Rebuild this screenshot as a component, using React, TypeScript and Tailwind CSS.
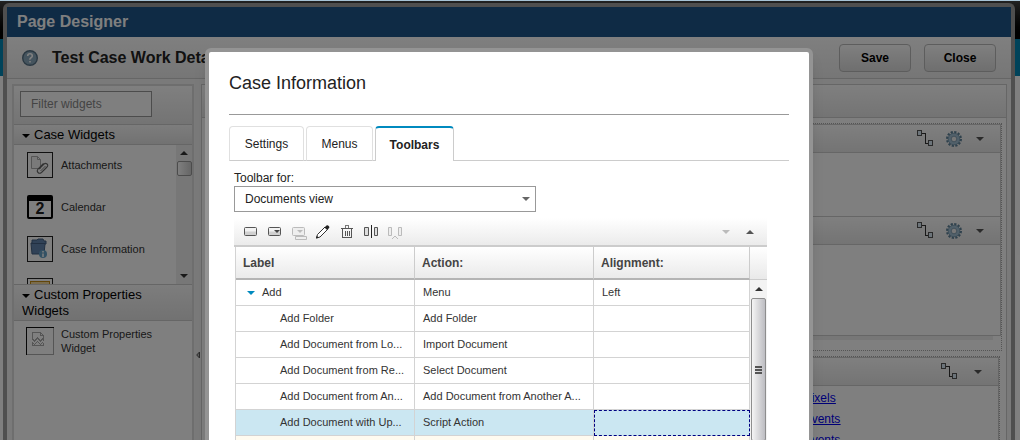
import { FunctionComponent, ReactNode } from "react";

const WireIcon = () => (
  <svg width="17" height="17" viewBox="0 0 17 17" fill="none" shapeRendering="crispEdges">
    <path d="M5 3.5h3.5v10H11" stroke="#333" />
    <rect x="0.5" y="0.5" width="4" height="5" fill="#d8e8f4" stroke="#555" />
    <rect x="11.5" y="10.5" width="4" height="5" fill="#d8e8f4" stroke="#555" />
  </svg>
);

const GearIcon = () => (
  <svg width="16" height="16" viewBox="0 0 16 16" fill="none">
    <circle cx="8" cy="8" r="6.8" stroke="#5f8299" strokeWidth="2.4" strokeDasharray="2.2 1.36" />
    <circle cx="8" cy="8" r="4.4" stroke="#a3c1d4" strokeWidth="3.4" />
    <circle cx="8" cy="8" r="5.8" stroke="#6f91a8" strokeWidth="0.7" />
    <circle cx="8" cy="8" r="2.8" stroke="#6f91a8" strokeWidth="0.8" fill="#eee" />
  </svg>
);

const Down = ({ className = "text-[#555]" }: { className?: string }) => (
  <svg width="8" height="4" viewBox="0 0 8 4" className={className} fill="currentColor">
    <path d="M0 0h8L4 4z" />
  </svg>
);

const Up = ({ className = "text-[#555]" }: { className?: string }) => (
  <svg width="8" height="4" viewBox="0 0 8 4" className={className} fill="currentColor">
    <path d="M0 4h8L4 0z" />
  </svg>
);

const AttachmentIcon = () => (
  <svg width="26" height="26" viewBox="0 0 26 26" fill="none">
    <rect x="0.5" y="0.5" width="25" height="25" fill="#fff" stroke="#222" />
    <path d="M4.5 4.5h6l3 3v9h-9zM10.5 4.5v3h3" stroke="#aaa" fill="#f4f4f4" />
    <path d="M12 17l5-5q1.500-1.300 3 0t0 3l-5.500 5.500q-2 1.500-3.500 0t0-3.500l5.500-5.500" stroke="#666" strokeWidth="1.1" />
    <path d="M13.500 19l5-5" stroke="#888" />
  </svg>
);

const CalendarIcon = () => (
  <div className="flex h-6 w-[26px] items-end justify-center rounded-xs border-2 border-t-[6px] border-black bg-white text-base leading-4 font-bold text-[#222]">
    2
  </div>
);

const CaseIcon = () => (
  <svg width="26" height="26" viewBox="0 0 26 26" fill="none">
    <rect x="0.5" y="0.5" width="25" height="25" fill="#fff" stroke="#222" />
    <path d="M5 4h5l1-1h5l1 2h2v3h-1l-1 10H5L4 7h1z" fill="#6385ae" stroke="#456184" />
    <path d="M4 7.5h14" stroke="#456184" />
    <circle cx="16" cy="18" r="4" fill="#66a3c9" />
    <path d="M16 15v1.5M16 17.5V21" stroke="#fff" strokeWidth="1.5" />
  </svg>
);

const YellowIcon = () => (
  <svg width="26" height="26" viewBox="0 0 26 26" fill="none">
    <rect x="0.5" y="0.5" width="25" height="25" fill="#fff" stroke="#222" />
    <rect x="3.5" y="3.5" width="19" height="19" fill="#f5d89a" stroke="#c38a12" />
  </svg>
);

const BrokenIcon = () => (
  <svg width="28" height="28" viewBox="0 0 28 28" fill="none" shapeRendering="crispEdges">
    <path d="M27.5 0v27.5H0" stroke="#aaa" />
    <path d="M0.5 28V0.5H28" stroke="#111" />
    <path
      d="M6.5 12V5.5h8l3 3V12M14.5 5.5v3h3M6.5 12l2 2 3-3 3 3 2-2 1.5 1.5M6.5 18.5v-3l2 2 3-3 3 3 2-2 1 1v2z"
      stroke="#aaa"
    />
  </svg>
);

const widgets = [
  { name: "Attachments", icon: <AttachmentIcon /> },
  { name: "Calendar", icon: <CalendarIcon /> },
  { name: "Case Information", icon: <CaseIcon /> },
  { name: "", icon: <YellowIcon /> },
];

const rows = [
  { label: "Add Folder", action: "Add Folder" },
  { label: "Add Document from Lo...", action: "Import Document" },
  { label: "Add Document from Re...", action: "Select Document" },
  { label: "Add Document from An...", action: "Add Document from Another A..." },
  { label: "Add Document with Up...", action: "Script Action", selected: true },
];

const tools = [
  {
    name: "Add button",
    icon: (
      <>
        <rect x="1.5" y="3.5" width="12" height="8" rx="1" fill="#f2f2f2" stroke="#555" />
        <path d="M2 7.5h11V11H2z" fill="#d0d0d0" />
      </>
    ),
  },
  {
    name: "Add menu",
    icon: (
      <>
        <rect x="1.5" y="3.5" width="12" height="8" rx="1" fill="#f2f2f2" stroke="#555" />
        <path d="M2 7.5h11V11H2z" fill="#d0d0d0" />
        <path d="M7 6h6l-3 3z" fill="#444" />
      </>
    ),
  },
  {
    name: "Add submenu",
    icon: (
      <>
        <rect x="1.5" y="3.5" width="12" height="8" rx="1" fill="#eee" stroke="#bbb" />
        <path d="M6 6h6L9 9z" fill="#bbb" />
        <path d="M4.5 12.5h11v3h-11z" fill="#eee" stroke="#bbb" />
      </>
    ),
  },
  {
    name: "Edit",
    icon: (
      <>
        <path d="M1.5 14l1-3.500 7.500-7.500 2.500 2.500-7.500 7.500z" fill="#fff" stroke="#333" />
        <path d="M1 14.500l.8-2.700 2 2z" fill="#222" />
        <path d="M9.500 3.500L11.500 1.500q.8-.6 1.600 0l1 1q.6.800 0 1.600l-2 2z" fill="#222" />
      </>
    ),
  },
  {
    name: "Delete",
    icon: (
      <>
        <path d="M6 3.500v-2h3.500v2" stroke="#777" shapeRendering="crispEdges" />
        <path d="M2 4.500h12M3.500 5v8.500h9V5M6.500 7v5M8.500 7v5M10.500 7v5" stroke="#555" shapeRendering="crispEdges" />
      </>
    ),
  },
  {
    name: "Insert separator",
    icon: (
      <>
        <path d="M1.5 3.5h4v8h-4zM11.500 3.5h3v8h-3z" fill="#ddd" stroke="#555" />
        <path d="M8.500 1v13" stroke="#222" />
      </>
    ),
  },
  {
    name: "Remove separator",
    icon: <path d="M1.5 3.5h3v8h-3zM11.5 3.5h3v8h-3zM5 15l3-3 3 3" fill="#eee" stroke="#bbb" />,
  },
];

const SectionHead = ({ children }: { children: ReactNode }) => (
  <h2 className="border-y border-[#ccc] bg-gradient-to-b from-[#fafafa] to-[#e4e4e4] px-2 pt-0.5 pb-px text-[13px] leading-4 text-black">
    <Down className="mr-1 inline-block align-middle text-black" />
    {children}
  </h2>
);

const CanvasCard = ({ gear, className, children }: { gear?: boolean; className: string; children?: ReactNode }) => (
  <section className={className}>
    <header className="flex h-7 items-center justify-end gap-3 border-b border-[#ccc] bg-gradient-to-b from-white to-[#e8e8e8] pr-4">
      <WireIcon />
      {gear && <GearIcon />}
      <span className={gear ? "pl-0.5" : "pl-1"}>
        <Down />
      </span>
    </header>
    {children}
  </section>
);

const Designer: FunctionComponent = () => (
  <div className="absolute inset-0 flex flex-col overflow-hidden pt-[3px] pr-[5px] pl-[3px]">
    <div className="flex min-h-0 flex-1 flex-col rounded-t-md border-4 border-b-0 border-[#9e9e9e] bg-[#f4f4f4]">
      <h1 className="bg-[#1e568a] px-[10px] text-base leading-[30px] font-bold text-white">Page Designer</h1>
      <header className="flex h-[42px] shrink-0 items-center border-b border-[#ccc] bg-gradient-to-b from-white to-[#ededed] px-[15px]">
        <svg width="16" height="16" viewBox="0 0 16 16" fill="none">
          <circle cx="8" cy="8" r="7.3" fill="#8aa8bc" stroke="#557084" strokeWidth="1.4" />
          <path d="M5.700 6q0-2.200 2.300-2.200T10.300 6Q10.300 7 9 7.800T8 9.700M8 11v1.600" stroke="#fff" strokeWidth="1.600" />
        </svg>
        <h2 className="ml-[14px] text-base font-bold text-[#222]">Test Case Work Details</h2>
        <div className="ml-auto flex gap-[13px] text-xs font-bold text-black">
          <button className="h-7 w-[72px] rounded-sm border border-[#bbb] bg-gradient-to-b from-white to-[#dedede]">Save</button>
          <button className="h-7 w-[72px] rounded-sm border border-[#bbb] bg-gradient-to-b from-white to-[#dedede]">Close</button>
        </div>
      </header>

      <div className="flex min-h-0 flex-1 pt-[5px] pr-1 pl-[5px]">
        <aside className="w-[182px] shrink-0 border-2 border-b-0 border-[#dcdcdc] bg-white">
          <div className="bg-gradient-to-b from-white to-[#e8e8e8] px-1.5 pt-[5px] pb-[7px]">
            <input
              aria-label="Filter widgets"
              placeholder="Filter widgets"
              className="h-[26px] w-[132px] border border-[#999] bg-white px-[10px] text-xs placeholder:text-[#888]"
            />
          </div>
          <SectionHead>Case Widgets</SectionHead>
          <div className="flex h-[139px] overflow-hidden">
            <ul className="flex flex-1 flex-col gap-4 pt-[7px] pl-[13px]">
              {widgets.map((w, i) => (
                <li key={i} className="flex h-[26px] shrink-0 items-center gap-2 text-[11px] text-[#333]">
                  {w.icon}
                  {w.name}
                </li>
              ))}
            </ul>
            <div className="flex w-[16px] flex-col items-center bg-[#eee] pt-1.5 pb-[6px]">
              <Up className="text-[#333]" />
              <div className="mt-[6px] h-[15px] w-[15px] rounded-xs border border-[#999] bg-gradient-to-r from-white to-[#ccc]" />
              <Down className="mt-auto text-[#333]" />
            </div>
          </div>
          <SectionHead>Custom Properties Widgets</SectionHead>
          <div className="flex gap-[7px] pt-[6px] pl-3 text-[11px] leading-[14px] text-[#333]">
            <BrokenIcon />
            <span className="w-24">Custom Properties Widget</span>
          </div>
        </aside>

        <div className="flex w-[7px] shrink-0 items-center justify-center bg-[#f4f4f4] pt-[186px]">
          <svg width="4" height="8" viewBox="0 0 4 8">
            <path d="M3.5 1v6L.7 4z" fill="#bbb" stroke="#555" />
          </svg>
        </div>

        <main className="flex min-w-0 flex-1 flex-col border border-b-0 border-[#ccc] bg-white">
          <div className="h-[33px] shrink-0 border-b border-[#ccc] bg-gradient-to-b from-white to-[#e8e8e8]" />
          <div className="mt-[5px] mr-1 ml-1 shrink-0 border border-dotted border-[#aaa] pb-[10px]">
            <CanvasCard gear className="h-[93px] border border-[#ccc]" />
            <CanvasCard gear className="h-[119px] border border-t-0 border-[#ccc]" />
            <div className="mr-2 h-1 bg-[#eee]" />
          </div>
          <div className="mt-[5px] mr-1.5 ml-1 shrink-0 border border-dotted border-[#aaa]">
            <CanvasCard className="border border-[#ccc]">
              <div className="flex flex-col gap-[5px] pt-1 pl-[597px] text-xs text-[#0000ee] underline">
                <a href="#pixels">pixels</a>
                <a href="#events">events</a>
                <a href="#more">events</a>
              </div>
            </CanvasCard>
          </div>
        </main>
      </div>
    </div>
  </div>
);

const ToolbarTable = () => (
  <div className="ml-px flex">
    <table className="min-w-0 flex-1 table-fixed border-separate border-spacing-0 border-l border-[#d3d3d3] text-left text-[11px] text-[#333]">
      <thead>
        <tr className="h-[33px] bg-gradient-to-b from-white to-[#e9e9e9] text-xs text-[#444]">
          <th className="w-[179px] border-r border-b-2 border-[#ccc] border-b-[#b4b4b4] px-[7px]">Label</th>
          <th className="w-[179px] border-r border-b-2 border-[#ccc] border-b-[#b4b4b4] px-[7px]">Action:</th>
          <th className="border-r border-b-2 border-[#ccc] border-b-[#b4b4b4] px-[7px]">Alignment:</th>
        </tr>
      </thead>
      <tbody>
        <tr className="h-[26px]">
          <td className="border-r border-b border-[#d3d3d3] pl-[11px]">
            <Down className="mr-[7px] inline-block align-middle text-[#008abf]" />
            Add
          </td>
          <td className="border-r border-b border-[#d3d3d3] px-2">Menu</td>
          <td className="border-r border-b border-[#d3d3d3] px-2">Left</td>
        </tr>
        {rows.map((r) => (
          <tr key={r.label} className={r.selected ? "h-[26px] bg-[#cbe7f2]" : "h-[26px]"}>
            <td className="border-r border-b border-[#d3d3d3] pl-11 whitespace-nowrap">{r.label}</td>
            <td className="border-r border-b border-[#d3d3d3] px-2 whitespace-nowrap">{r.action}</td>
            <td className={r.selected ? "border border-dashed border-[#000080]" : "border-r border-b border-[#d3d3d3]"} />
          </tr>
        ))}
        <tr className="h-[26px] bg-[#fffbf0]">
          <td className="border-r border-[#d3d3d3]" />
          <td className="border-r border-[#d3d3d3]" />
          <td className="border-r border-[#d3d3d3]" />
        </tr>
      </tbody>
    </table>
    <div className="flex w-[17px] flex-col">
      <div className="h-[33px] border-b border-[#ccc] bg-gradient-to-b from-white to-[#e9e9e9]" />
      <div className="flex flex-1 flex-col bg-[#f3f3f3] px-px">
        <div className="flex h-[18px] items-center justify-center">
          <Up className="text-[#333]" />
        </div>
        <div className="flex h-[143px] flex-col items-center justify-center gap-px rounded-xs border border-[#8e8e8e] bg-gradient-to-r from-[#f5f5f5] to-[#bdbdc2]">
          <i className="h-0.5 w-[7px] bg-[#555]" />
          <i className="h-0.5 w-[7px] bg-[#555]" />
          <i className="h-0.5 w-[7px] bg-[#555]" />
        </div>
      </div>
    </div>
  </div>
);

const CaseDialog: FunctionComponent = () => (
  <div className="absolute inset-x-0 top-px bottom-0 flex items-start justify-center overflow-hidden bg-black/50 pt-[47px] pr-[5px] pl-[3px]">
    <div role="dialog" aria-label="Case Information" className="w-full max-w-[608px] rounded-md border-4 border-[#949494] bg-white shadow-lg">
      <div className="px-5 pt-[17px]">
        <h2 className="border-b border-[#999] pb-[17px] text-lg text-[#222]">Case Information</h2>
        <div role="tablist" className="mt-[11px] flex text-xs text-[#222]">
          <button role="tab" className="h-[35px] w-[75px] rounded-t-sm border border-[#e0e0e0] border-b-[#ccc]">Settings</button>
          <i className="w-0.5 border-b border-[#ccc]" />
          <button role="tab" className="h-[35px] w-[67px] rounded-t-sm border border-[#e0e0e0] border-b-[#ccc]">Menus</button>
          <i className="w-0.5 border-b border-[#ccc]" />
          <button role="tab" aria-selected="true" className="h-[35px] w-[79px] rounded-t-sm border-x border-t-2 border-[#ccc] border-t-[#008abf] font-bold">
            Toolbars
          </button>
          <i className="flex-1 border-b border-[#ccc]" />
        </div>
        <div className="pt-[9px] pr-[22px] pl-[5px]">
          <label htmlFor="toolbar-for" className="block text-xs text-[#222]">Toolbar for:</label>
          <div className="grid max-w-[302px] items-center">
            <select id="toolbar-for" className="col-start-1 row-start-1 h-[26px] appearance-none border border-[#999] bg-white px-[10px] text-xs text-[#222]">
              <option>Documents view</option>
            </select>
            <Down className="pointer-events-none col-start-1 row-start-1 mr-[6px] justify-self-end text-[#666]" />
          </div>
          <div className="mt-[6px] flex h-[29px] items-center gap-2 border-b-2 border-[#ccc] bg-gradient-to-b from-white to-[#ebebeb] pl-[9px]">
            {tools.map((t) => (
              <button key={t.name} aria-label={t.name}>
                <svg width="16" height="16" viewBox="0 0 16 16" fill="none">
                  {t.icon}
                </svg>
              </button>
            ))}
            <button aria-label="Move down" className="ml-auto">
              <Down className="text-[#bbb]" />
            </button>
            <button aria-label="Move up" className="mr-[13px] ml-2">
              <Up />
            </button>
          </div>
          <ToolbarTable />
        </div>
      </div>
    </div>
  </div>
);

export default function App() {
  return (
    <div className="relative h-screen overflow-hidden bg-white font-['Liberation_Sans',Arial,sans-serif]">
      <div className="h-px bg-[#a7c3d6]" />
      <div className="h-[38px] bg-gradient-to-b from-[#444] to-black" />
      <div className="h-[37px] bg-[#0087b5]" />
      <Designer />
      <CaseDialog />
    </div>
  );
}
